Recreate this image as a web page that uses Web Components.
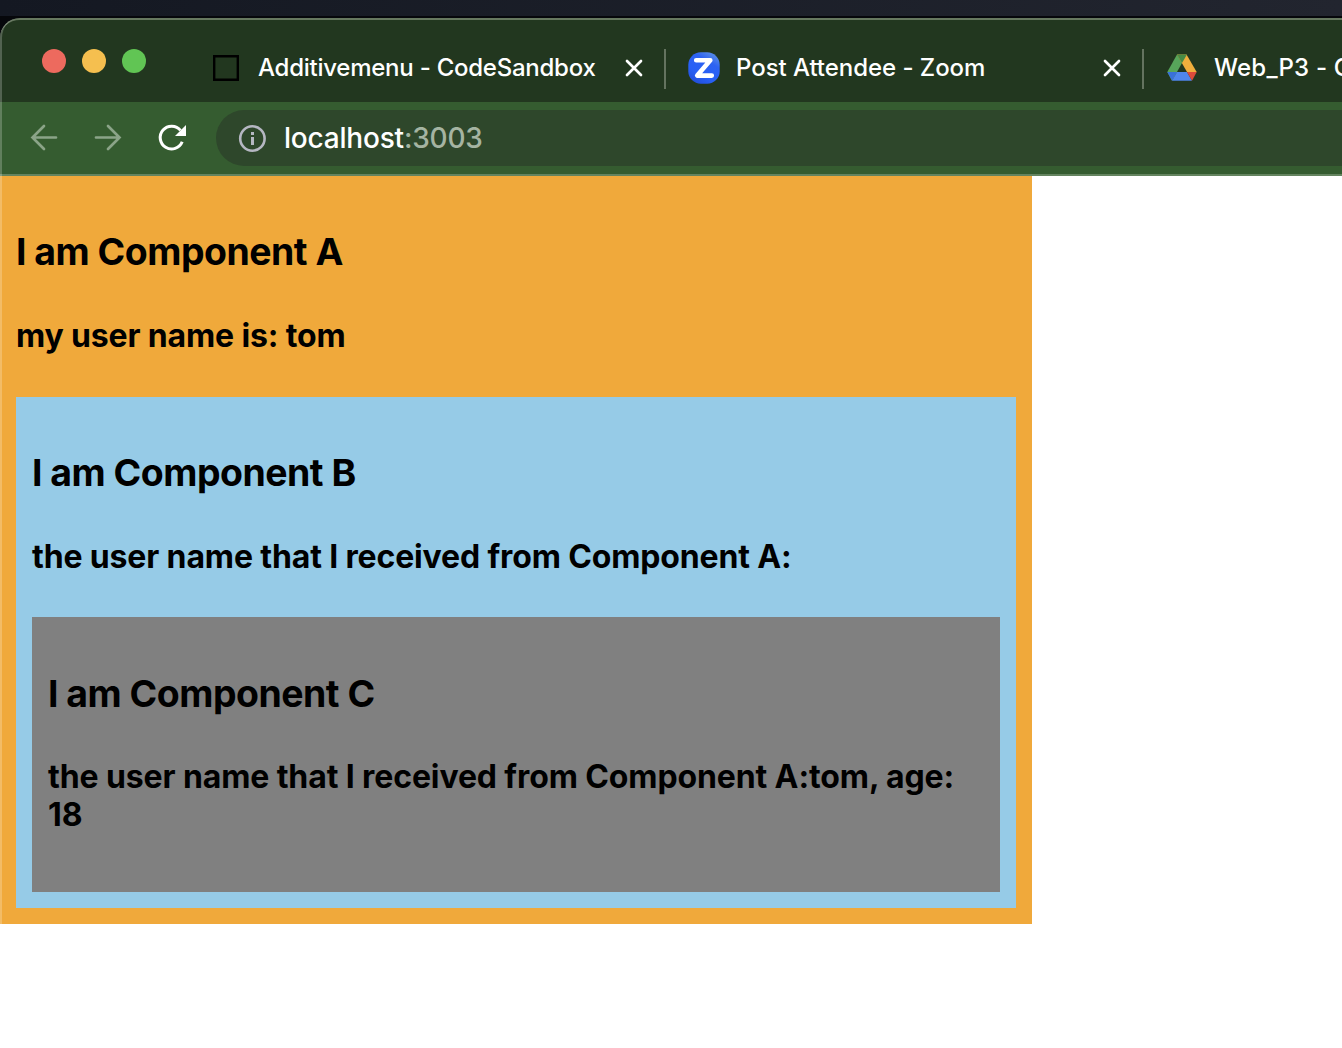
<!DOCTYPE html>
<html lang="en">
<head>
<meta charset="utf-8">
<title>localhost:3003</title>
<style>
body { margin: 0; background: #fff; font-family: Inter, "Liberation Sans", sans-serif; font-feature-settings: "calt" 0; }
</style>
</head>
<body>
<browser-window>
  <browser-tab slot="tabs" style="--ls:-.25px">
    <tab-icon slot="icon" name="square"></tab-icon>Additivemenu - CodeSandbox
  </browser-tab>
  <browser-tab slot="tabs" style="--ls:-.05px">
    <tab-icon slot="icon" name="zoom"></tab-icon>Post Attendee - Zoom
  </browser-tab>
  <browser-tab slot="tabs" style="--ls:.2px">
    <tab-icon slot="icon" name="drive"></tab-icon>Web_P3 - C
  </browser-tab>
  <address-bar slot="toolbar" host="localhost" port=":3003"></address-bar>
  <demo-box color="#f0a93b" style="width:1000px;--ls:-.15px">
    <span slot="title">I am Component A</span>
    <span slot="text">my user name is: tom</span>
    <demo-box color="#96cbe7" style="--ls:-.14px">
      <span slot="title">I am Component B</span>
      <span slot="text">the user name that I received from Component A:</span>
      <demo-box color="#808080" style="--ls:-.11px">
        <span slot="title">I am Component C</span>
        <span slot="text">the user name that I received from Component A:tom, age: 18</span>
      </demo-box>
    </demo-box>
  </demo-box>
</browser-window>
<script>
const define = (name, html, setup) => customElements.define(name, class extends HTMLElement {
  constructor() {
    super();
    this.attachShadow({ mode: 'open' }).innerHTML = html;
  }
  connectedCallback() { if (setup) setup(this, this.shadowRoot); }
});

define('browser-window', `<style>
:host { display: flex; flex-direction: column; height: 1048px; position: relative; overflow: hidden; background: #fff; }
.desk { height: 16px; flex: none; background: linear-gradient(90deg, #141822, #22252f); border-bottom: 2px solid #06070b; }
.corner { flex: none; background: #06070b; }
.strip { box-sizing: border-box; height: 84px; padding-left: 42px; display: flex; background: #22371f; border-top: 2px solid #66785f; border-radius: 20px 0 0 0; overflow: hidden; }
.lights { display: flex; gap: 16px; padding-top: 29px; width: 146px; flex: none; }
.lights i { width: 24px; height: 24px; border-radius: 50%; }
.tabs { display: flex; flex: none; }
.bar { flex: none; height: 72px; background: #355c30; border-bottom: 2px solid #64845f; }
.edge { position: absolute; left: 0; top: 18px; bottom: 0; width: 60px; box-sizing: border-box; border-left: 2px solid rgba(255,255,255,.22); border-top-left-radius: 20px; pointer-events: none; }
</style>
<div class="desk"></div>
<div class="corner"><div class="strip">
  <div class="lights"><i style="background:#ed6a5e"></i><i style="background:#f5bf4f"></i><i style="background:#61c554"></i></div>
  <div class="tabs"><slot name="tabs"></slot></div>
</div></div>
<div class="bar"><slot name="toolbar"></slot></div>
<main><slot></slot></main>
<div class="edge"></div>`);

define('browser-tab', `<style>
:host { display: flex; box-sizing: border-box; width: 478px; height: 40px; margin-top: 29px; padding: 0 20px 0 22px; align-items: center; border-right: 2px solid #64735f; color: #fff; font-size: 24px; font-weight: 450; line-height: 38px; white-space: nowrap; }
.label { flex: 1; padding-left: 16px; overflow: hidden; height: 38px; margin-top: -2px; letter-spacing: var(--ls, 0); }
svg { width: 20px; height: 20px; flex: none; margin-top: -2px; }
</style>
<slot name="icon"></slot><span class="label"><slot></slot></span>
<svg viewBox="0 0 20 20"><path d="M3 3L17 17M17 3L3 17" stroke="#fff" stroke-width="2.7" stroke-linecap="round"/></svg>`);

const icons = {
  square: '<path d="M4.2 4.2H27.8V27.8H4.2Z" fill="none" stroke="#000" stroke-width="2.4"/>',
  zoom: '<defs><linearGradient id="g" x1="0" y1="1" x2=".6" y2="0"><stop offset="0" stop-color="#1f47d0"/><stop offset=".4" stop-color="#2860f5"/><stop offset=".8" stop-color="#2d62f2"/><stop offset="1" stop-color="#4f83e8"/></linearGradient></defs><rect x=".3" y=".3" width="31.4" height="31.4" rx="12.5" fill="url(#g)"/><path d="M8.2 8.3H22.3L9.2 23.6H23.8" fill="none" stroke="#fff" stroke-width="4.6" stroke-linecap="round" stroke-linejoin="round"/>',
  drive: '<path d="M11 2.5L1.3 20L6 28.7L16 11Z" fill="#57a55a"/><path d="M20.5 2.5L30.7 20H21L11 2.5Z" fill="#f0ae3d"/><path d="M11 2.5H21L16 11Z" fill="#468a45"/><path d="M1.3 20H11L6 28.7Z" fill="#3971d9"/><path d="M11 20H21L26 28.7H6Z" fill="#4f86ec"/><path d="M21 20H30.7L26 28.7Z" fill="#dc4b3b"/>'
};
define('tab-icon', `<style>:host{display:block;width:32px;height:32px;flex:none;margin-top:-2px}svg{display:block}</style><svg width="32" height="32" viewBox="0 0 32 32"></svg>`,
  (el, root) => { root.querySelector('svg').innerHTML = icons[el.getAttribute('name')]; });

define('address-bar', `<style>
:host { display: flex; height: 72px; align-items: center; padding-left: 28px; }
.nav { display: flex; gap: 32px; width: 188px; flex: none; }
.field { flex: 1; height: 56px; border-radius: 28px 0 0 28px; background: #2e472b; display: flex; align-items: center; padding-left: 20px; font-size: 28px; font-weight: 450; line-height: 56px; color: #fff; letter-spacing: -.2px; }
.info { margin-right: 16px; }
.port { color: #a5b4a2; }
</style>
<div class="nav">
<svg width="32" height="32" viewBox="0 0 32 32"><path d="M28 15.5H4.5M16 4L4.5 15.5L16 27" fill="none" stroke="#8ba488" stroke-width="2.7" stroke-linecap="round"/></svg>
<svg width="32" height="32" viewBox="0 0 32 32"><path d="M4 15.5H27.5M16 4L27.5 15.5L16 27" fill="none" stroke="#8ba488" stroke-width="2.7" stroke-linecap="round"/></svg>
<svg width="32" height="32" viewBox="0 0 32 32"><path d="M26.2 19.8A11.4 11.4 0 1 1 24.5 8.4" fill="none" stroke="#fff" stroke-width="3"/><path d="M30 3V14H19Z" fill="#fff"/></svg>
</div>
<div class="field">
<svg class="info" width="32" height="32" viewBox="0 0 32 32"><circle cx="16.4" cy="16.5" r="12.2" fill="none" stroke="#b5b7c2" stroke-width="2.6"/><path d="M15 10h3v3h-3zM15 15h3v8h-3z" fill="#b5b7c2"/></svg>
<span class="host"></span><span class="port"></span>
</div>`, (el, root) => {
  for (const k of ['host', 'port']) root.querySelector('.' + k).textContent = el.getAttribute(k);
});

define('demo-box', `<style>
:host { display: block; padding: 16px; color: #000; }
h3, h4 { font-weight: 650; }
h3 { font-size: 37.44px; line-height: 44px; margin: 38.44px 0 42.56px; letter-spacing: -.5px; }
h4 { font-size: 32px; line-height: 38px; margin: 42.56px 0 41.56px; letter-spacing: var(--ls, 0); }
</style>
<h3><slot name="title"></slot></h3><h4><slot name="text"></slot></h4><slot></slot>`,
  el => { el.style.background = el.getAttribute('color'); });
</script>
</body>
</html>
